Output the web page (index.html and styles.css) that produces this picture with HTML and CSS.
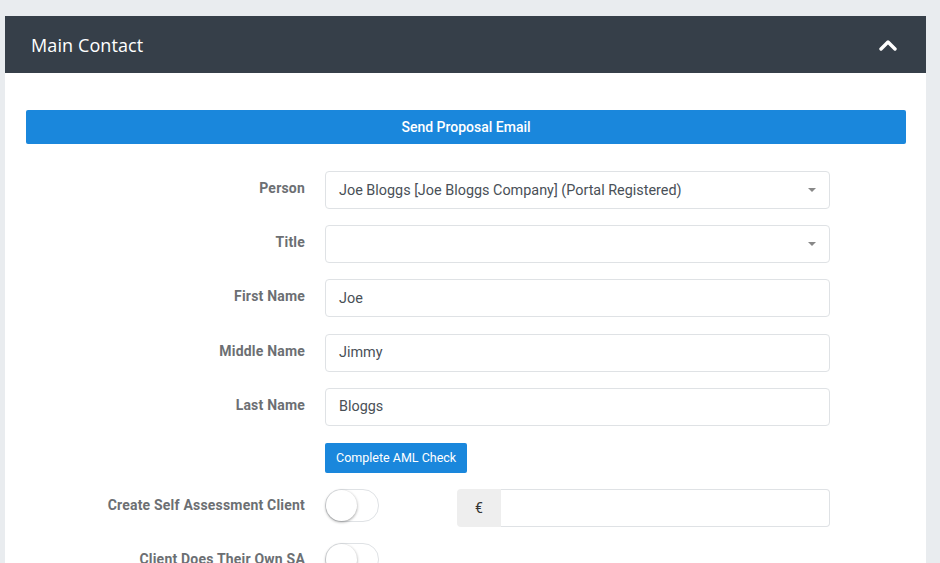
FILE: index.html
```html
<!DOCTYPE html>
<html lang="en">

<head>
    <meta charset="UTF-8">
    <meta name="viewport" content="width=device-width, initial-scale=1.0">
    <title>Main Contact</title>
    <link rel="stylesheet" href="styles.css">
</head>

<body>
    <div class="card">
        <div class="card-header">
            <h2>Main Contact</h2>
            <svg class="chevron" width="18" height="12" viewBox="0 0 18 12">
                <path d="M2 10 L9 3 L16 10" fill="none" stroke="#ffffff" stroke-width="3.4" stroke-linecap="round" stroke-linejoin="round" />
            </svg>
        </div>
        <div class="card-body">
            <button class="btn btn-block">Send Proposal Email</button>

            <div class="form">
                <div class="form-row">
                    <label>Person</label>
                    <div class="field select">Joe Bloggs [Joe Bloggs Company] (Portal Registered)<span class="caret"></span></div>
                </div>
                <div class="form-row">
                    <label>Title</label>
                    <div class="field select"><span class="caret"></span></div>
                </div>
                <div class="form-row">
                    <label>First Name</label>
                    <div class="field">Joe</div>
                </div>
                <div class="form-row">
                    <label>Middle Name</label>
                    <div class="field">Jimmy</div>
                </div>
                <div class="form-row">
                    <label>Last Name</label>
                    <div class="field">Bloggs</div>
                </div>
                <div class="form-row aml-row">
                    <label></label>
                    <div><button class="btn btn-sm">Complete AML Check</button></div>
                </div>
                <div class="form-row toggle-row">
                    <label>Create Self Assessment Client</label>
                    <div class="toggle-line">
                        <div class="switch"><span class="knob"></span></div>
                        <div class="input-group">
                            <span class="addon">€</span>
                            <div class="group-field"></div>
                        </div>
                    </div>
                </div>
                <div class="form-row toggle-row">
                    <label>Client Does Their Own SA</label>
                    <div class="toggle-line">
                        <div class="switch"><span class="knob"></span></div>
                    </div>
                </div>
            </div>
        </div>
    </div>
</body>

</html>
```

FILE: styles.css
```css
body {
    margin: 0;
    background-color: #e9ecef;
    font-family: Roboto, "Liberation Sans", sans-serif;
    height: 563px;
    overflow: hidden;
}

.card {
    margin: 16px 0 0 5px;
    width: 921px;
    background-color: #ffffff;
}

.card-header {
    height: 57px;
    background-color: #363f49;
    display: flex;
    align-items: center;
    justify-content: space-between;
    padding: 0 29px 0 26px;
}

.card-header h2 {
    margin: 0;
    color: #ffffff;
    font-family: "Open Sans", sans-serif;
    font-size: 18px;
    font-weight: 500;
    letter-spacing: 0.1px;
}

.chevron {
    margin-top: 1px;
}

.card-body {
    padding: 37px 20px 0 21px;
}

.btn {
    background-color: #1a87dc;
    color: #ffffff;
    border: none;
    border-radius: 2px;
    font-family: Roboto, sans-serif;
    font-weight: 500;
    cursor: pointer;
}

.btn-block {
    display: block;
    width: 100%;
    height: 34px;
    font-size: 14px;
}

.btn-sm {
    height: 30px;
    padding: 0 11px;
    font-size: 12.5px;
    font-weight: 400;
}

.form {
    margin-top: 27px;
    display: flex;
    flex-direction: column;
    gap: 16.2px;
}

.form-row {
    display: grid;
    grid-template-columns: 279px 505px;
    column-gap: 20px;
    align-items: start;
}

.form-row label {
    text-align: right;
    font-size: 14px;
    font-weight: 700;
    letter-spacing: 0.2px;
    color: #6c6f73;
    padding-top: 9px;
}

.aml-row {
    margin-top: 1px;
}

.field {
    position: relative;
    height: 36px;
    border: 1px solid #dfe2e5;
    border-radius: 4px;
    padding: 0 13px;
    display: flex;
    align-items: center;
    font-size: 14.4px;
    color: #495057;
}

.caret {
    position: absolute;
    right: 13px;
    top: 16px;
    border-left: 4px solid transparent;
    border-right: 4px solid transparent;
    border-top: 4px solid #888888;
}

.toggle-row label {
    padding-top: 8px;
}

.toggle-line {
    display: flex;
    align-items: flex-start;
}

.switch {
    position: relative;
    width: 52px;
    height: 31px;
    border: 1px solid #dfe2e5;
    border-radius: 16px;
    background-color: #ffffff;
}

.knob {
    position: absolute;
    left: 0;
    top: 0;
    width: 31px;
    height: 31px;
    border-radius: 50%;
    background-color: #ffffff;
    box-shadow: 0 1px 3px rgba(0, 0, 0, 0.4);
}

.input-group {
    margin-left: auto;
    width: 373px;
    height: 38px;
    display: flex;
}

.addon {
    width: 44px;
    background-color: #eeeeee;
    display: flex;
    align-items: center;
    justify-content: center;
    font-size: 14px;
    color: #333333;
    border-radius: 4px 0 0 4px;
}

.group-field {
    flex: 1;
    border: 1px solid #dfe2e5;
    border-left: none;
    border-radius: 0 4px 4px 0;
}
```
